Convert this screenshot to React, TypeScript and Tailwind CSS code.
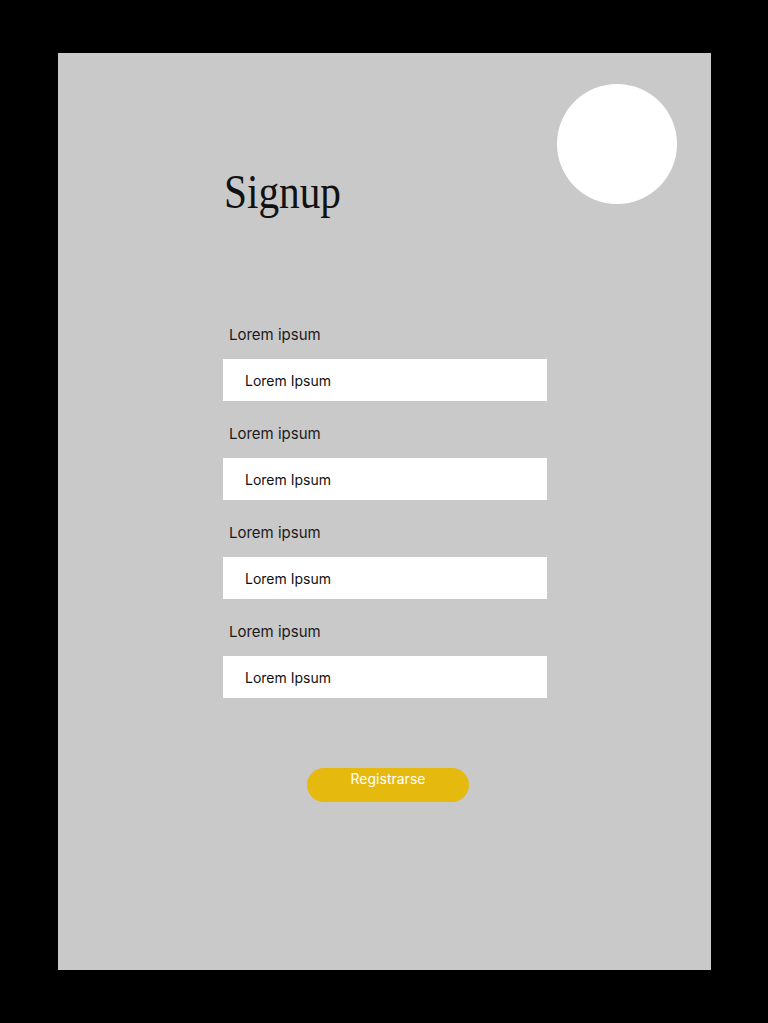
export default function App() {
  const fields = [1, 2, 3, 4];

  return (
    <div className="min-h-screen bg-black pt-[53px] pl-[58px]">
      <div className="w-[653px] h-[917px] bg-[#c9c9c9] flex flex-col">
        {/* Header */}
        <div className="flex justify-between items-start pt-[31px] pr-[34px] pl-[166px]">
          <h1 className="mt-[84px] text-[48px] leading-none text-[#111] font-['Liberation_Serif',serif] origin-left scale-x-[0.86]">
            Signup
          </h1>
          <div className="w-[120px] h-[120px] rounded-full bg-white" />
        </div>

        {/* Form */}
        <form className="mt-[109px] ml-[165px] w-[324px] flex flex-col font-['Inter',sans-serif]">
          {fields.map((f, i) => (
            <div key={f} className={i > 0 ? "mt-[23px]" : ""}>
              <label className="block pl-[6px] text-[15px] leading-5 text-[#1a1a1a]">
                Lorem ipsum
              </label>
              <div className="mt-[14px] h-[42px] bg-white flex items-center pl-[22px] pt-[2px] text-sm leading-5 text-[#111]">
                Lorem Ipsum
              </div>
            </div>
          ))}

          <button
            type="button"
            className="mt-[70px] ml-[84px] w-[162px] h-[34px] rounded-full bg-[#e6b90e] text-white text-sm leading-5 pt-px self-start flex justify-center items-start"
          >
            Registrarse
          </button>
        </form>
      </div>
    </div>
  );
}
